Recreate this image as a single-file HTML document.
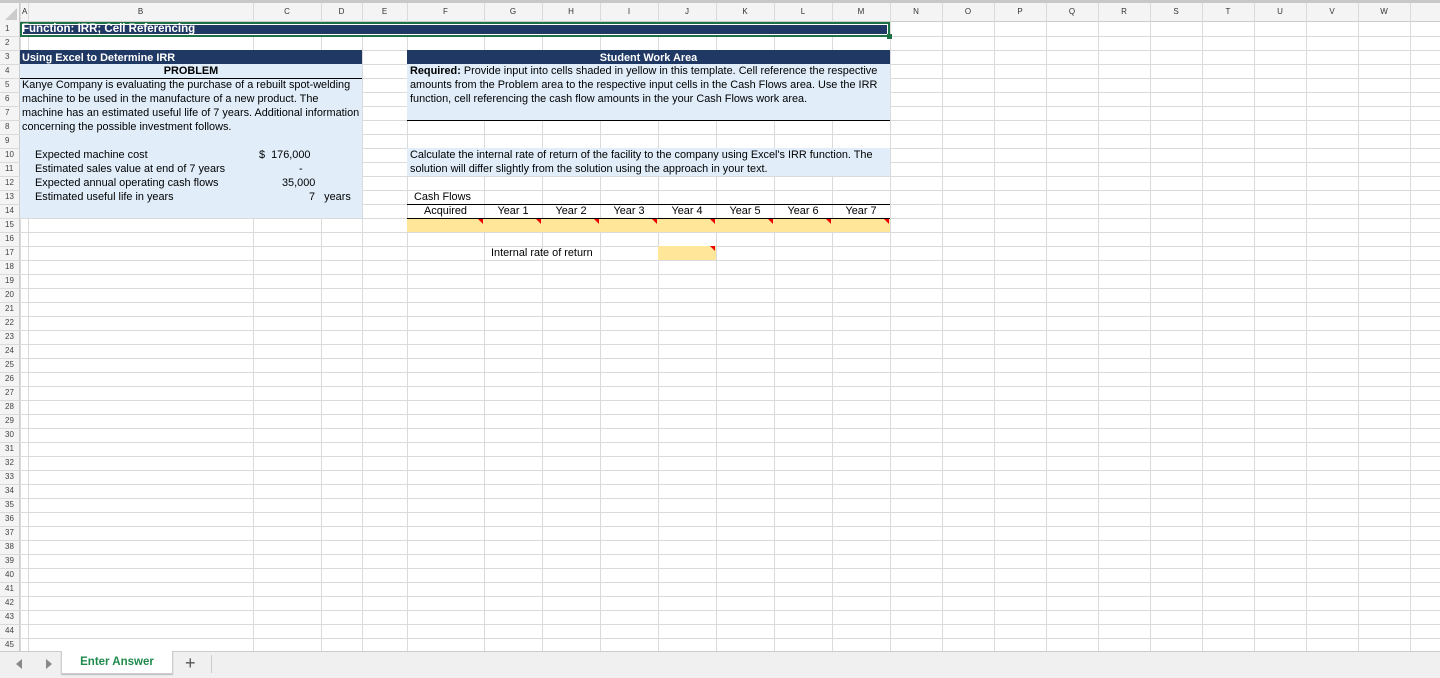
<!DOCTYPE html><html><head><style>
*{margin:0;padding:0;box-sizing:border-box}
body{width:1440px;height:678px;overflow:hidden;background:#fff;font-family:"Liberation Sans",Arial,sans-serif;font-size:10.9px;color:#000;position:relative}
.a{position:absolute}
.v{position:absolute;top:3px;width:1px;height:648px;background:#dadada}
.h{position:absolute;left:0;width:1440px;height:1px;background:#dadada}
.rn{position:absolute;left:0;width:20px;text-align:left;padding-left:5px;font-size:8px;color:#444;height:14px;line-height:14px}
.cl{position:absolute;top:3px;height:18px;line-height:18px;text-align:center;font-size:8px;color:#333}
.t{position:absolute;white-space:nowrap;line-height:14px}
.tri{position:absolute;width:0;height:0;border-top:5px solid #e00;border-left:5px solid transparent}
</style></head><body>
<div class="a" style="left:0;top:0;width:1440px;height:3px;background:#c8c8c8"></div>
<div class="a" style="left:0;top:3px;width:1440px;height:19px;background:#f4f4f4;border-bottom:1px solid #ccc"></div>
<div class="a" style="left:0;top:3px;width:20px;height:648px;background:#f4f4f4;border-right:1px solid #ccc"></div>
<svg class="a" style="left:5px;top:8px" width="12" height="12"><polygon points="12,0 12,12 0,12" fill="#ccc"/></svg>
<div id="g"></div>
<div class="a" style="left:20px;top:50px;width:342px;height:14px;background:#203864"></div>
<div class="a" style="left:20px;top:64px;width:342px;height:154px;background:#e1eefa"></div>
<div class="a" style="left:20px;top:78px;width:342px;height:1px;background:#000"></div>
<div class="a" style="left:407px;top:50px;width:483px;height:14px;background:#203864"></div>
<div class="a" style="left:407px;top:64px;width:483px;height:56px;background:#e1eefa"></div>
<div class="a" style="left:407px;top:120px;width:483px;height:1px;background:#000"></div>
<div class="a" style="left:407px;top:148px;width:483px;height:28px;background:#e1eefa"></div>
<div class="a" style="left:407px;top:204px;width:483px;height:1px;background:#000"></div>
<div class="a" style="left:407px;top:218px;width:483px;height:1px;background:#000"></div>
<div class="a" style="left:407px;top:219px;width:483px;height:13px;background:#ffe699"></div>
<div class="a" style="left:658px;top:246px;width:58px;height:14px;background:#ffe699"></div>
<div class="a" style="left:20px;top:22px;width:870px;height:15px;background:#203864;border:2px solid #1e7145;outline:1px solid #fff;outline-offset:-3px"></div>
<div class="a" style="left:887px;top:34px;width:5px;height:5px;background:#1e7145"></div>
<div id="tr"></div>
<div class="t" style="left:22px;top:22px;color:#fff;font-weight:bold;font-size:11.5px">Function: IRR; Cell Referencing</div>
<div class="t" style="left:22px;top:51px;color:#fff;font-weight:bold">Using Excel to Determine IRR</div>
<div class="t" style="left:20px;width:342px;text-align:center;top:64px;font-weight:bold">PROBLEM</div>
<div class="t" style="left:22px;top:78px">Kanye Company is evaluating the purchase of a rebuilt spot-welding</div>
<div class="t" style="left:22px;top:92px">machine to be used in the manufacture of a new product. The</div>
<div class="t" style="left:22px;top:106px">machine has an estimated useful life of 7 years. Additional information</div>
<div class="t" style="left:22px;top:120px">concerning the possible investment follows.</div>
<div class="t" style="left:35px;top:148px">Expected machine cost</div>
<div class="t" style="left:35px;top:162px">Estimated sales value at end of 7 years</div>
<div class="t" style="left:35px;top:176px">Expected annual operating cash flows</div>
<div class="t" style="left:35px;top:190px">Estimated useful life in years</div>
<div class="t" style="left:259px;top:148px">$&nbsp; 176,000</div>
<div class="t" style="left:299px;top:162px">-</div>
<div class="t" style="left:282px;top:176px">35,000</div>
<div class="t" style="left:309px;top:190px">7&nbsp;&nbsp; years</div>
<div class="t" style="left:407px;width:483px;text-align:center;top:51px;color:#fff;font-weight:bold">Student Work Area</div>
<div class="t" style="left:410px;top:64px"><b>Required:</b> Provide input into cells shaded in yellow in this template. Cell reference the respective</div>
<div class="t" style="left:410px;top:78px">amounts from the Problem area to the respective input cells in the Cash Flows area. Use the IRR</div>
<div class="t" style="left:410px;top:92px">function, cell referencing the cash flow amounts in the your Cash Flows work area.</div>
<div class="t" style="left:410px;top:148px">Calculate the internal rate of return of the facility to the company using Excel's IRR function. The</div>
<div class="t" style="left:410px;top:162px">solution will differ slightly from the solution using the approach in your text.</div>
<div class="t" style="left:414px;top:190px">Cash Flows</div>
<div class="t" style="left:407px;width:77px;text-align:center;top:204px">Acquired</div>
<div class="t" style="left:484px;width:58px;text-align:center;top:204px">Year 1</div>
<div class="t" style="left:542px;width:58px;text-align:center;top:204px">Year 2</div>
<div class="t" style="left:600px;width:58px;text-align:center;top:204px">Year 3</div>
<div class="t" style="left:658px;width:58px;text-align:center;top:204px">Year 4</div>
<div class="t" style="left:716px;width:58px;text-align:center;top:204px">Year 5</div>
<div class="t" style="left:774px;width:58px;text-align:center;top:204px">Year 6</div>
<div class="t" style="left:832px;width:58px;text-align:center;top:204px">Year 7</div>
<div class="t" style="left:491px;top:246px">Internal rate of return</div>
<div class="a" style="left:0;top:651px;width:1440px;height:27px;background:#f0f0f0;border-top:1px solid #ccc"></div>
<svg class="a" style="left:14px;top:657px" width="40" height="14"><polygon points="8,2 8,12 2,7" fill="#888"/><polygon points="32,2 32,12 38,7" fill="#888"/></svg>
<div class="a" style="left:61px;top:651px;width:112px;height:23px;background:#fff;border:1px solid #ccc;border-top:none;box-shadow:0 1px 1px #bbb;color:#1e8a4c;font-weight:bold;font-size:11.5px;text-align:center;line-height:22px">Enter Answer</div>
<div class="a" style="left:185px;top:652px;font-size:18px;color:#555;line-height:22px">+</div>
<div class="a" style="left:211px;top:655px;width:1px;height:18px;background:#ccc"></div>
<script>
var cols=[20,28,253,321,362,407,484,542,600,658,716,774,832,890];
for(var x=942;x<1440;x+=52)cols.push(x);
var names=["A","B","C","D","E","F","G","H","I","J","K","L","M","N","O","P","Q","R","S","T","U","V","W","X"];
var g=document.getElementById('g'),h='';
for(var i=0;i<cols.length;i++){h+='<div class="v" style="left:'+cols[i]+'px"></div>';
var w=(cols[i+1]||1492)-cols[i];
h+='<div class="cl" style="left:'+cols[i]+'px;width:'+w+'px;'+(i==0?'text-align:left;padding-left:2px':'')+'">'+names[i]+'</div>';}
for(var r=1;r<=45;r++){var y=22+(r-1)*14;h+='<div class="h" style="top:'+(y+14)+'px"></div><div class="rn" style="top:'+y+'px">'+r+'</div>';}
g.innerHTML=h;
var t='';[484,542,600,658,716,774,832,890].forEach(function(x){t+='<div class="tri" style="left:'+(x-6)+'px;top:219px"></div>'});
t+='<div class="tri" style="left:710px;top:246px"></div>';
document.getElementById('tr').innerHTML=t;
</script>
</body></html>
